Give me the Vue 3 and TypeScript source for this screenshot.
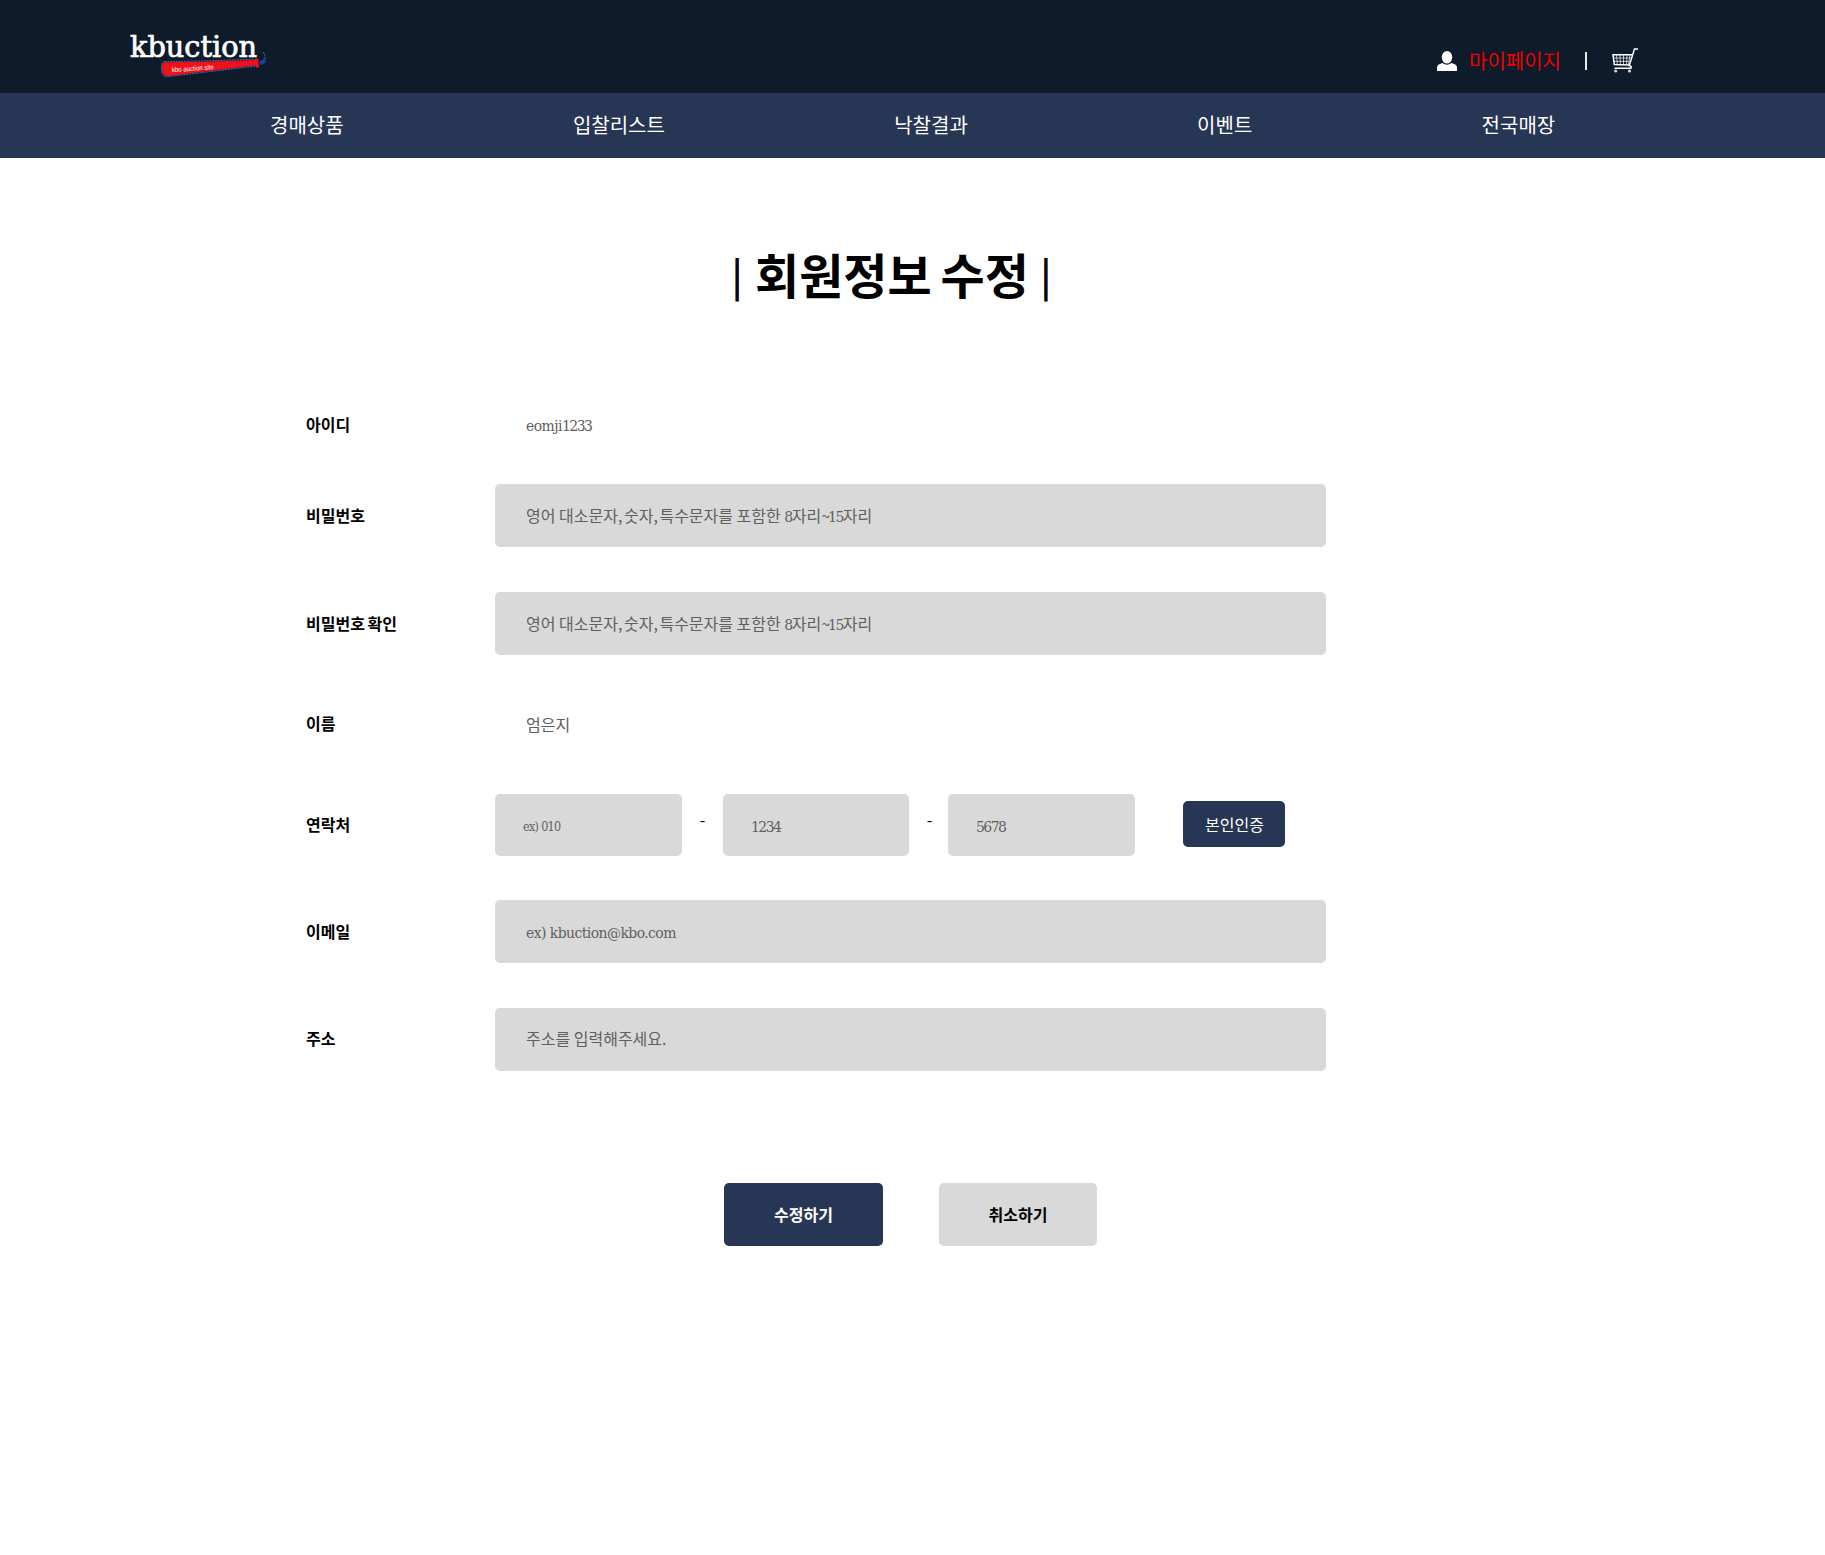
<script setup lang="ts">
interface Field {
  key: string
  label: string
  text: string
  boxed: boolean
}

interface Run {
  kind: 'hangul' | 'latin' | 'digit' | 'mark'
  text: string
}

const menu: string[] = ['경매상품', '입찰리스트', '낙찰결과', '이벤트', '전국매장']

const accountFields: Field[] = [
  { key: 'id', label: '아이디', text: 'eomji1233', boxed: false },
  { key: 'password', label: '비밀번호', text: '영어 대소문자, 숫자, 특수문자를 포함한 8자리~15자리', boxed: true },
  { key: 'confirm', label: '비밀번호 확인', text: '영어 대소문자, 숫자, 특수문자를 포함한 8자리~15자리', boxed: true },
  { key: 'name', label: '이름', text: '엄은지', boxed: false },
]

const contactFields: Field[] = [
  { key: 'email', label: '이메일', text: 'ex) kbuction@kbo.com', boxed: true },
  { key: 'address', label: '주소', text: '주소를 입력해주세요.', boxed: true },
]

// Splits a value into script runs so Latin and digits can be set in the serif face
function runs(value: string): Run[] {
  const parts = value.match(/[0-9]+|[~,]|[a-z@)][a-z@). ]*|[^0-9~,a-z@)]+/g) ?? []
  return parts.map((text): Run => {
    if (/^[0-9]/.test(text)) return { kind: 'digit', text }
    if (/^[~,]/.test(text)) return { kind: 'mark', text }
    if (/^[a-z@)]/.test(text)) return { kind: 'latin', text }
    return { kind: 'hangul', text }
  })
}
</script>

<template>
  <div class="page">
    <header class="top">
      <svg class="logo" width="150" height="60" viewBox="0 0 150 60">
        <text class="brand" x="0" y="31.500" textLength="127" lengthAdjust="spacingAndGlyphs">kbuction</text>
        <path class="bat" d="M34.500 37.300 L72 36.800 L124 35 L126 33.500 L128.200 33.500 L129 42 L127 43 L125 40.500 L75 46.500 L38 51 Q33.500 51 32.500 48 L31.800 41 Q32 37.600 34.500 37.300Z" />
        <path class="outline" d="M34.500 36.600 L72 36 L124 34.200 M125 41.200 L75 47.200 L38 51.600 Q33 51.800 31.800 48 L31.200 41 Q31.400 37 34.500 36.600" />
        <path class="tail" d="M129.500 37 Q132.500 37 133.500 34.500 L135 34.500 Q135 39 129.800 39.200" />
        <path class="outline" d="M133 27 Q135.500 30 135 34" />
        <text class="tagline" transform="translate(42 47.200) rotate(-4)" textLength="42" lengthAdjust="spacingAndGlyphs">kbo auction site</text>
      </svg>
      <div class="user">
        <svg class="person" width="20" height="20" viewBox="0 0 20 20">
          <ellipse cx="10" cy="6.300" rx="5.200" ry="6.300" />
          <path d="M0 20 V17 Q0 13.800 3 13 L5.500 12.100 Q10 15.600 14.500 12.100 L17 13 Q20 13.800 20 17 V20Z" />
        </svg>
        <span class="mypage">마이페이지</span>
        <i class="divider"></i>
        <svg class="cart" width="27" height="26" viewBox="0 0 27 26">
          <path class="frame" d="M26 .9 H22.500 L17.300 17.500 Q20 18.500 19 20.200 H2.500" />
          <path class="frame" d="M20.400 6.800 H1 L2.300 16.600 L17.300 17" />
          <path class="mesh" d="M4.500 7 L5.300 16.500 M8 7 L8.400 16.500 M11.500 7 V16.500 M15 7 L14.500 16.500 M18 7 L16.500 16.500 M1.300 10 H19.300 M1.700 13.300 H18.400" />
          <circle cx="3.700" cy="23" r="1.600" />
          <circle cx="17.500" cy="23" r="1.600" />
        </svg>
      </div>
    </header>

    <nav class="menu">
      <a v-for="item in menu" :key="item">{{ item }}</a>
    </nav>

    <main>
      <h1><span class="bar">|</span><span class="heading">회원정보 수정</span><span class="bar">|</span></h1>

      <div v-for="f in accountFields" :key="f.key" class="row" :class="f.key">
        <label>{{ f.label }}</label>
        <div class="field" :class="{ boxed: f.boxed }">
          <p><span v-for="(r, i) in runs(f.text)" :key="i" :class="r.kind">{{ r.text }}</span></p>
        </div>
      </div>

      <div class="row phone">
        <label>연락처</label>
        <div class="field boxed part first"><p><span class="latin">ex) 010</span></p></div>
        <span class="dash">-</span>
        <div class="field boxed part second"><p><span class="digit">1234</span></p></div>
        <span class="dash narrow">-</span>
        <div class="field boxed part third"><p><span class="digit">5678</span></p></div>
        <button class="verify">본인인증</button>
      </div>

      <div v-for="f in contactFields" :key="f.key" class="row" :class="f.key">
        <label>{{ f.label }}</label>
        <div class="field" :class="{ boxed: f.boxed }">
          <p><span v-for="(r, i) in runs(f.text)" :key="i" :class="r.kind">{{ r.text }}</span></p>
        </div>
      </div>

      <div class="actions">
        <button class="primary">수정하기</button>
        <button class="secondary">취소하기</button>
      </div>
    </main>
  </div>
</template>

<style>
body {
  margin: 0;
  background: #fff;
}
</style>

<style scoped>
.page {
  width: 1825px;
  height: 1555px;
  overflow: hidden;
  background: #fff;
  color: #000;
  font-family: "Noto Sans CJK KR", sans-serif;
}

.top {
  box-sizing: border-box;
  height: 93px;
  padding: 25px 186px 0 130px;
  display: flex;
  justify-content: space-between;
  background: #0d1b2a;
}

.logo {
  overflow: visible;
}

.brand {
  font-family: "DejaVu Serif Condensed", "DejaVu Serif", serif;
  font-size: 30px;
  fill: #fff;
  stroke: #fff;
  stroke-width: 0.7;
}

.bat {
  fill: #ee1119;
}

.outline {
  fill: none;
  stroke: #4a66b8;
  stroke-width: 1;
  stroke-dasharray: 2 0.8;
}

.tail {
  fill: #1e40a0;
  stroke: #1e40a0;
  stroke-width: 1.4;
}

.tagline {
  font-family: "Liberation Sans", sans-serif;
  font-size: 7px;
  fill: #fff;
}

.user {
  display: flex;
  align-items: flex-start;
}

.person {
  margin-top: 26px;
  fill: #fff;
}

.mypage {
  margin: 21px 24px 0 12px;
  font-size: 20px;
  line-height: 30px;
  color: #f00000;
}

.divider {
  width: 2px;
  height: 18px;
  margin: 27px 25px 0 0;
  background: #e8eaec;
}

.cart {
  margin-top: 23px;
}

.cart path {
  fill: none;
  stroke: #fff;
}

.cart .frame {
  stroke-width: 1.5;
}

.cart .mesh {
  stroke-width: 0.7;
}

.cart circle {
  fill: #cfd3d8;
}

.menu {
  box-sizing: border-box;
  height: 65px;
  padding: 0 0 2px 270px;
  display: flex;
  align-items: center;
  gap: 229.3px;
  background: #283655;
  color: #fff;
  font-size: 20px;
  line-height: 30px;
}

main {
  padding-left: 306px;
}

h1 {
  margin: 83px 0 0 427px;
  height: 70px;
  display: flex;
  align-items: center;
  font-size: 48px;
  line-height: 70px;
}

.heading {
  margin: 0 13px 0 14px;
  padding-bottom: 7px;
  word-spacing: -2px;
  white-space: nowrap;
}

.bar {
  width: 8px;
  display: flex;
  justify-content: center;
  font-family: "Liberation Serif", serif;
  font-size: 46px;
  font-weight: 400;
  -webkit-text-stroke: 1px #000;
}

.row {
  display: flex;
  align-items: center;
  height: 63px;
}

.row.id {
  margin-top: 83px;
}

.row.password {
  margin-top: 27px;
}

.row.confirm,
.row.address {
  margin-top: 45px;
}

.row.name,
.row.phone {
  margin-top: 38px;
}

.row.phone {
  height: 62px;
}

.row.email {
  margin-top: 44px;
}

label {
  width: 189px;
  padding-bottom: 2px;
  font-size: 16px;
  font-weight: 700;
  line-height: 24px;
  word-spacing: -1px;
}

.id label,
.name label,
.address label {
  padding-bottom: 3px;
}

.field {
  box-sizing: border-box;
  width: 831px;
  height: 100%;
  padding-left: 31px;
  display: flex;
  align-items: center;
  color: #606060;
  font-size: 16px;
  line-height: 24px;
  white-space: nowrap;
}

.field p {
  margin: 0;
  white-space: pre;
}

.id .field,
.name .field {
  padding-bottom: 2px;
}

.address .field {
  padding-bottom: 3px;
}

.latin,
.digit {
  font-family: "DejaVu Serif Condensed", "DejaVu Serif", serif;
  font-size: 15.5px;
  letter-spacing: -0.55px;
}

.digit {
  letter-spacing: -1.5px;
}

.mark {
  letter-spacing: -2px;
}

.boxed {
  background: #d9d9d9;
  border-radius: 5px;
}

.part {
  width: 187px;
  padding-left: 28px;
}

.first .latin {
  font-size: 12.5px;
  letter-spacing: -0.7px;
}

.second {
  width: 186px;
  padding-top: 2px;
}

.third {
  padding-top: 1px;
}

.dash {
  width: 41px;
  padding-bottom: 12px;
  text-align: center;
  font-size: 16px;
}

.dash.narrow {
  box-sizing: border-box;
  width: 39px;
  padding-left: 2px;
}

button {
  padding: 0 0 2px;
  border: 0;
  border-radius: 5px;
  background: #283655;
  color: #fff;
  font-family: inherit;
  font-size: 16px;
}

.verify {
  width: 102px;
  height: 46px;
  margin: 0 0 2px 48px;
  padding: 0 0 0 1px;
}

.actions {
  display: flex;
  gap: 56px;
  margin: 112px 0 0 418px;
}

.actions button {
  width: 159px;
  height: 63px;
  font-weight: 700;
}

.actions .secondary {
  width: 158px;
  background: #d9d9d9;
  color: #000;
}
</style>
